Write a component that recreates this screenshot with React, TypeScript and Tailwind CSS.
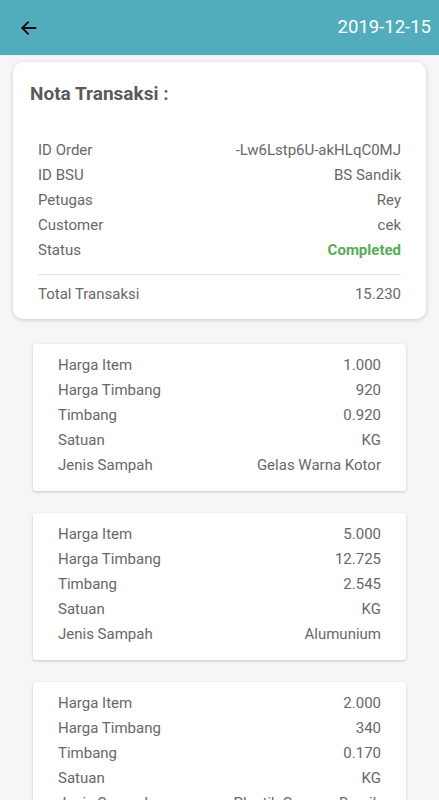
import React from "react";

interface Row {
  label: string;
  value: string;
  className?: string;
}

const notaRows: Row[] = [
  { label: "ID Order", value: "-Lw6Lstp6U-akHLqC0MJ" },
  { label: "ID BSU", value: "BS Sandik" },
  { label: "Petugas", value: "Rey" },
  { label: "Customer", value: "cek" },
  { label: "Status", value: "Completed", className: "font-bold text-[#55ad57]" },
];

const items = [
  { harga: "1.000", hargaTimbang: "920", timbang: "0.920", satuan: "KG", jenis: "Gelas Warna Kotor" },
  { harga: "5.000", hargaTimbang: "12.725", timbang: "2.545", satuan: "KG", jenis: "Alumunium" },
  { harga: "2.000", hargaTimbang: "340", timbang: "0.170", satuan: "KG", jenis: "Plastik Campur Bersih" },
];

const InfoRow = ({ label, value, className }: Row) => (
  <div className="flex justify-between items-center h-[25px] text-[15px] leading-[25px]">
    <span>{label}</span>
    <span className={className}>{value}</span>
  </div>
);

const App = () => {
  return (
    <div
      className="w-[439px] h-[800px] overflow-hidden bg-[#f6f6f6] text-[#686868]"
      style={{ fontFamily: "Roboto, 'Noto Sans', sans-serif" }}
    >
      <header className="h-[56px] bg-[#51adbb] flex items-center justify-between pl-[19px] pr-[8px] border-b border-[#e3f1f3]">
        <svg width="20" height="20" viewBox="0 0 24 24" fill="none" stroke="#111" strokeWidth="2.2" strokeLinecap="round" strokeLinejoin="round">
          <path d="M20 12H4" />
          <path d="M11 5l-7 7 7 7" />
        </svg>
        <span className="text-white text-[18.5px]">2019-12-15</span>
      </header>

      <div className="mx-[13px] mt-[6px] bg-white rounded-[10px] shadow-[0_1px_4px_rgba(0,0,0,0.18)] pt-[19px] pb-[12px] px-[17px]">
        <h1 className="text-[19px] leading-[26px] font-bold text-[#5a5a5a]">Nota Transaksi :</h1>
        <div className="mt-[31px] px-[8px]">
          {notaRows.map((r) => (
            <InfoRow key={r.label} {...r} />
          ))}
          <div className="h-px bg-[#e2e2e2] mt-[11px] mb-[7px]" />
          <InfoRow label="Total Transaksi" value="15.230" />
        </div>
      </div>

      <div className="flex flex-col gap-[22px] mt-[25px] mx-[33px]">
        {items.map((it, i) => (
          <div
            key={i}
            className="bg-white rounded-[3px] shadow-[0_1px_3px_rgba(0,0,0,0.2)] pt-[9px] pb-[13px] px-[25px]"
          >
            <InfoRow label="Harga Item" value={it.harga} />
            <InfoRow label="Harga Timbang" value={it.hargaTimbang} />
            <InfoRow label="Timbang" value={it.timbang} />
            <InfoRow label="Satuan" value={it.satuan} />
            <InfoRow label="Jenis Sampah" value={it.jenis} />
          </div>
        ))}
      </div>
    </div>
  );
};

export default App;
